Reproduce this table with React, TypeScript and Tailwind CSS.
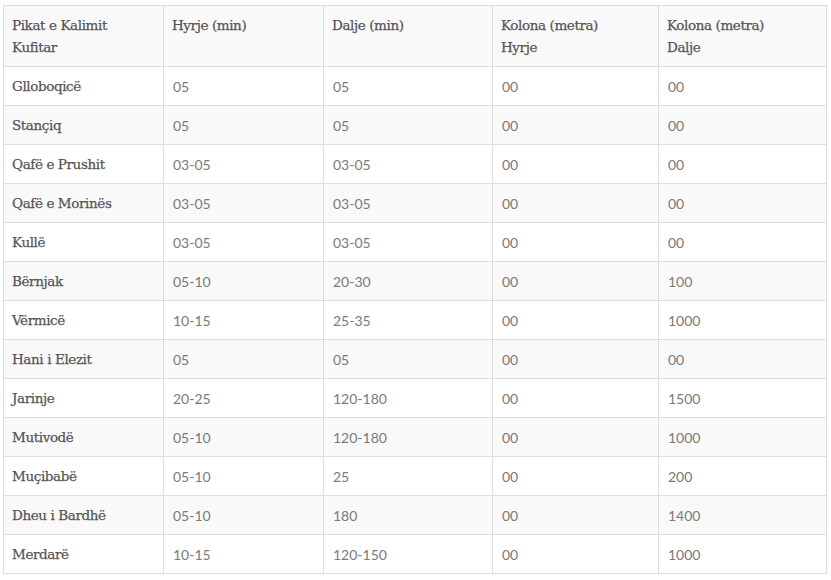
import React from 'react';

const rows: [string, string, string, string, string][] = [
  ['Glloboqicë', '05', '05', '00', '00'],
  ['Stançiq', '05', '05', '00', '00'],
  ['Qafë e Prushit', '03-05', '03-05', '00', '00'],
  ['Qafë e Morinës', '03-05', '03-05', '00', '00'],
  ['Kullë', '03-05', '03-05', '00', '00'],
  ['Bërnjak', '05-10', '20-30', '00', '100'],
  ['Vërmicë', '10-15', '25-35', '00', '1000'],
  ['Hani i Elezit', '05', '05', '00', '00'],
  ['Jarinje', '20-25', '120-180', '00', '1500'],
  ['Mutivodë', '05-10', '120-180', '00', '1000'],
  ['Muçibabë', '05-10', '25', '00', '200'],
  ['Dheu i Bardhë', '05-10', '180', '00', '1400'],
  ['Merdarë', '10-15', '120-150', '00', '1000'],
];

const slab = "font-['DejaVu_Serif',serif]";

export default function App() {
  return (
    <div className="w-[831px] h-[580px] bg-white pt-[5px] pl-[3px]">
      <table className="table-fixed border-collapse w-[823px] text-[14px]">
        <colgroup>
          <col className="w-[160px]" />
          <col className="w-[160px]" />
          <col className="w-[169px]" />
          <col className="w-[166px]" />
          <col className="w-[168px]" />
        </colgroup>
        <thead>
          <tr className="bg-[#f9f9f9] h-[61px]">
            {['Pikat e Kalimit Kufitar', 'Hyrje (min)', 'Dalje (min)', 'Kolona (metra) Hyrje', 'Kolona (metra) Dalje'].map((h) => (
              <th
                key={h}
                className={`${slab} border border-[#dddddd] text-left align-top font-normal text-[13.5px] leading-[22px] text-[#555555] px-[8px] pt-[8px] pr-[30px] tracking-[-0.4px] [-webkit-text-stroke:0.25px_#555555]`}
              >
                {h}
              </th>
            ))}
          </tr>
        </thead>
        <tbody>
          {rows.map((r, i) => (
            <tr key={r[0]} className={`h-[39px] ${i % 2 === 1 ? 'bg-[#f9f9f9]' : 'bg-white'}`}>
              <td className={`${slab} border border-[#dddddd] px-[8px] pt-[1px] font-normal text-[13.5px] text-[#555555] tracking-[-0.4px] [-webkit-text-stroke:0.25px_#555555]`}>
                {r[0]}
              </td>
              {r.slice(1).map((c, j) => (
                <td
                  key={j}
                  className="border border-[#dddddd] px-[9px] font-['Lato',sans-serif] text-[#7a7a7a]"
                >
                  {c}
                </td>
              ))}
            </tr>
          ))}
        </tbody>
      </table>
    </div>
  );
}
